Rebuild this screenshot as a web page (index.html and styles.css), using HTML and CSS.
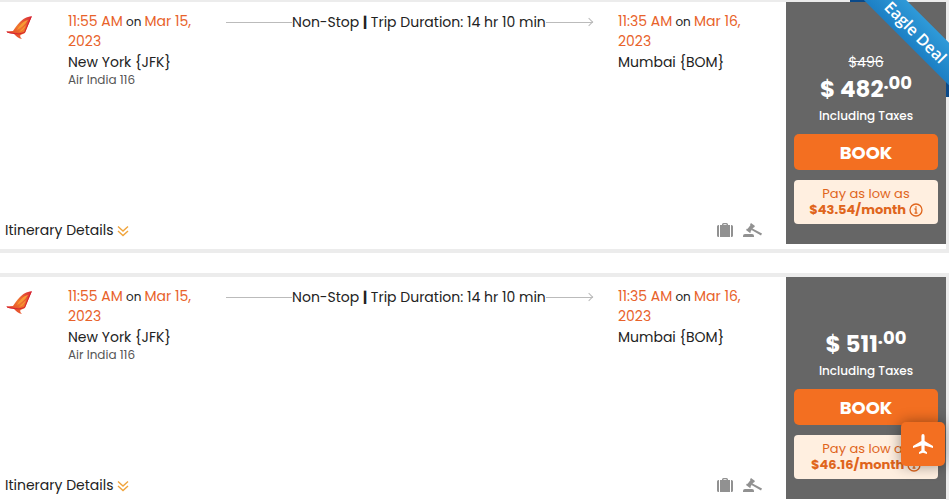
FILE: index.html
```html
<!DOCTYPE html>
<html lang="en">
  <head>
    <meta charset="UTF-8" />
    <meta name="viewport" content="width=device-width, initial-scale=1.0" />
    <title>Flight Results</title>
    <link rel="stylesheet" href="styles.css">
  </head>
  <body>
    <!-- shared icons -->
    <svg class="sprite" aria-hidden="true">
      <defs>
        <linearGradient id="wing" x1="1" y1="0" x2="0" y2="1">
          <stop offset="0" stop-color="#d92a3a" />
          <stop offset="0.5" stop-color="#f0782c" />
          <stop offset="1" stop-color="#dc2430" />
        </linearGradient>
      </defs>
      <symbol id="icon-airline" viewBox="0 0 28 24">
        <path fill="url(#wing)" d="M26 0 C20 1 17 3 14 6 C11 9 9 12 7 15 L0 15.500 C2 17 5 17.500 8 18 C10 20 12 22.500 16 23 C14 21 14 20 14.500 19 L19 17 C21 12 23 7 26 0 Z" />
        <path fill="#f79a35" d="M22 4 C17 5 14 9 11 14 C15 12 19 9 22 4 Z M13 16 C17 15 19 12 20 9 C17 12 15 14 13 16 Z" />
        <path fill="none" stroke="#d5202f" d="M25 1 L18.500 16.500 L13 18 C8 17.500 4 17 1 16" />
      </symbol>
      <symbol id="icon-down" viewBox="0 0 12 12">
        <path fill="none" stroke="#f0a43c" stroke-width="1.400" d="M1 1.500 L6 6 L11 1.500 M1 6 L6 10.500 L11 6" />
      </symbol>
      <symbol id="icon-bag" viewBox="0 0 16 15">
        <path fill="#919191" d="M2 2 V14 H1.500 Q0 14 0 12.500 V3.500 Q0 2 1.500 2 Z M3 2 H5 V1.500 Q5 0 6.500 0 H9.500 Q11 0 11 1.500 V2 H13 V14 H3 Z M6.500 1.200 V2 H9.500 V1.200 Z M14 2 H14.500 Q16 2 16 3.500 V12.500 Q16 14 14.500 14 H14 Z" />
      </symbol>
      <symbol id="icon-gavel" viewBox="0 0 20 15">
        <g fill="#919191">
          <path d="M8 0 L12 3 L11 4.500 L10.500 4.500 L7.500 8.500 L8 9 L7 10 L3 7 L4 5.500 L4.500 6 L7.500 2 L7 1.500 Z" />
          <path d="M9.500 5.500 L19 10.500 L18 12.500 L8.500 7 Z" />
          <path d="M2 11 H9 Q11 11 11 13 V14 H0 V13 Q0 11 2 11 Z" />
        </g>
      </symbol>
      <symbol id="icon-info" viewBox="0 0 14 14">
        <circle cx="7" cy="7" r="6" fill="none" stroke="#e0651c" stroke-width="1.300" />
        <path fill="none" stroke="#e0651c" stroke-width="1.300" d="M5.500 6 H7 V10 M5.500 10.200 H8.500 M7 3.300 V4.700" />
      </symbol>
      <symbol id="icon-plane" viewBox="0 0 20 20">
        <path fill="#fff" d="M10 0 Q11.600 0 11.600 2 V7 L20 12 V14 L11.600 11.500 V16.500 L14 18.200 V20 L10 18.800 L6 20 V18.200 L8.400 16.500 V11.500 L0 14 V12 L8.400 7 V2 Q8.400 0 10 0 Z" />
      </symbol>
    </svg>

    <main class="results">
      <article class="card">
        <div class="flight">
          <div class="route">
            <svg class="airline" role="img" aria-label="Air India"><use href="#icon-airline" /></svg>
            <div class="stop">
              <p class="time"><b>11:55 AM</b> on <b>Mar 15, 2023</b></p>
              <p class="city">New York {JFK}</p>
              <p class="carrier">Air India 116</p>
            </div>
            <div class="duration">
              <span>Non-Stop <strong>|</strong> Trip Duration: 14 hr 10 min</span>
            </div>
            <div class="stop">
              <p class="time"><b>11:35 AM</b> on <b>Mar 16, 2023</b></p>
              <p class="city">Mumbai {BOM}</p>
            </div>
          </div>
          <div class="flight-footer">
            <a class="details" href="#">Itinerary Details <svg class="down"><use href="#icon-down" /></svg></a>
            <div class="extras">
              <svg class="bag"><use href="#icon-bag" /></svg>
              <svg class="gavel"><use href="#icon-gavel" /></svg>
            </div>
          </div>
        </div>
        <div class="fare">
          <del class="old-price">$496</del>
          <p class="price">$ 482<sup>.00</sup></p>
          <p class="taxes">Including Taxes</p>
          <button type="button" class="book">BOOK</button>
          <div class="monthly">
            Pay as low as
            <strong>$43.54/month <svg class="info"><use href="#icon-info" /></svg></strong>
          </div>
        </div>
        <div class="ribbon"><span>Eagle Deal</span></div>
      </article>

      <article class="card">
        <div class="flight">
          <div class="route">
            <svg class="airline" role="img" aria-label="Air India"><use href="#icon-airline" /></svg>
            <div class="stop">
              <p class="time"><b>11:55 AM</b> on <b>Mar 15, 2023</b></p>
              <p class="city">New York {JFK}</p>
              <p class="carrier">Air India 116</p>
            </div>
            <div class="duration">
              <span>Non-Stop <strong>|</strong> Trip Duration: 14 hr 10 min</span>
            </div>
            <div class="stop">
              <p class="time"><b>11:35 AM</b> on <b>Mar 16, 2023</b></p>
              <p class="city">Mumbai {BOM}</p>
            </div>
          </div>
          <div class="flight-footer">
            <a class="details" href="#">Itinerary Details <svg class="down"><use href="#icon-down" /></svg></a>
            <div class="extras">
              <svg class="bag"><use href="#icon-bag" /></svg>
              <svg class="gavel"><use href="#icon-gavel" /></svg>
            </div>
          </div>
        </div>
        <div class="fare">
          <p class="price">$ 511<sup>.00</sup></p>
          <p class="taxes">Including Taxes</p>
          <button type="button" class="book">BOOK</button>
          <div class="monthly">
            Pay as low as
            <strong>$46.16/month <svg class="info"><use href="#icon-info" /></svg></strong>
          </div>
        </div>
      </article>
    </main>

    <button type="button" class="fab" aria-label="Search flights">
      <svg><use href="#icon-plane" /></svg>
    </button>
  </body>
</html>
```

FILE: styles.css
```css
body {
  font-family: Poppins, Inter, "Open Sans", sans-serif;
  font-size: 14px;
  line-height: 20px;
  color: #222;
  background-color: white;
  margin: 0;
  overflow: hidden;
}

p {
  margin: 0;
}

.sprite {
  position: absolute;
  width: 0;
  height: 0;
}

.results {
  display: flex;
  flex-direction: column;
  gap: 20px;
  margin-top: -2px;
}

.card {
  position: relative;
  display: flex;
  border: solid #ececec;
  border-width: 4px 3px 4px 0;
  padding-bottom: 5px;
}

.flight {
  flex: 1;
  display: flex;
  flex-direction: column;
  justify-content: space-between;
}

.route {
  display: grid;
  grid-template-columns: 62px 158px 1fr 148px;
  padding: 10px 20px 0 6px;
}

.airline {
  width: 28px;
  height: 24px;
  margin-top: 4px;
}

.time {
  font-size: 12px;
  padding-right: 16px;
}

.time b {
  font-size: 14px;
  font-weight: 400;
  line-height: 16px;
  color: #e8622a;
}

.city {
  font-size: 14px;
}

.carrier {
  font-size: 12px;
  line-height: 16px;
  color: #555;
}

.duration {
  position: relative;
  display: flex;
  align-items: center;
  height: 20px;
  margin-right: 25px;
  white-space: nowrap;
}

.duration::before,
.duration::after {
  content: "";
  flex: 1;
  height: 1px;
  background-color: #bbb;
}

.duration::before {
  flex-grow: 7;
}

.duration::after {
  flex-grow: 5;
}

/* arrow head at the end of the line */
.duration span::after {
  content: "";
  position: absolute;
  right: 1px;
  top: 7px;
  width: 5px;
  height: 5px;
  border: solid #bbb;
  border-width: 1px 1px 0 0;
  transform: rotate(45deg);
}

.flight-footer {
  display: flex;
  justify-content: space-between;
  align-items: center;
  padding: 0 23px 4px 5px;
}

.details {
  color: #222;
  text-decoration: none;
}

.down {
  width: 12px;
  height: 12px;
  vertical-align: -2px;
}

.extras {
  display: flex;
  align-items: center;
  gap: 10px;
}

.bag {
  width: 16px;
  height: 15px;
}

.gavel {
  width: 20px;
  height: 15px;
}

.fare {
  box-sizing: border-box;
  width: 160px;
  padding: 50px 8px 20px;
  background-color: #666;
  color: white;
  text-align: center;
}

.old-price {
  display: block;
  font-size: 14px;
}

.price {
  font-size: 23px;
  font-weight: 700;
  line-height: 34px;
}

.price sup {
  font-size: 18px;
  line-height: 0;
  vertical-align: 8px;
}

.taxes {
  font-size: 12px;
  font-weight: 500;
}

.book {
  display: block;
  width: 100%;
  height: 36px;
  margin: 8px 0 10px;
  padding: 0;
  border: none;
  border-radius: 5px;
  background-color: #f36f21;
  color: white;
  font-family: inherit;
  font-size: 18px;
  font-weight: 700;
  cursor: pointer;
}

.monthly {
  padding: 6px 0;
  border-radius: 4px;
  background-color: #ffefe0;
  color: #e0651c;
  font-size: 13px;
  line-height: 16px;
}

.monthly strong {
  display: block;
}

.info {
  width: 14px;
  height: 14px;
  vertical-align: -3px;
}

.ribbon {
  position: absolute;
  top: -4px;
  right: -3px;
  width: 99px;
  height: 99px;
  overflow: hidden;
  background: linear-gradient(#0a4a8a, #0a4a8a) 0 0 / 20px 4px no-repeat,
    linear-gradient(#0a4a8a, #0a4a8a) 100% 100% / 3px 20px no-repeat;
}

.ribbon span {
  position: absolute;
  top: 17px;
  left: -10px;
  box-sizing: border-box;
  width: 150px;
  padding: 2px 0 0 4px;
  background: linear-gradient(#2f9ad8, #1c7fc4);
  color: white;
  font-family: "Open Sans", sans-serif;
  font-size: 16px;
  font-weight: 600;
  line-height: 28px;
  text-align: center;
  transform: rotate(45deg);
}

.fab {
  position: fixed;
  right: 4px;
  bottom: 34px;
  display: flex;
  justify-content: center;
  align-items: center;
  width: 44px;
  height: 44px;
  padding: 0;
  border: none;
  border-radius: 5px;
  background-color: #f36f21;
  box-shadow: 0 0 14px rgba(0, 0, 0, 0.4);
  cursor: pointer;
}

.fab svg {
  width: 20px;
  height: 20px;
}
```
